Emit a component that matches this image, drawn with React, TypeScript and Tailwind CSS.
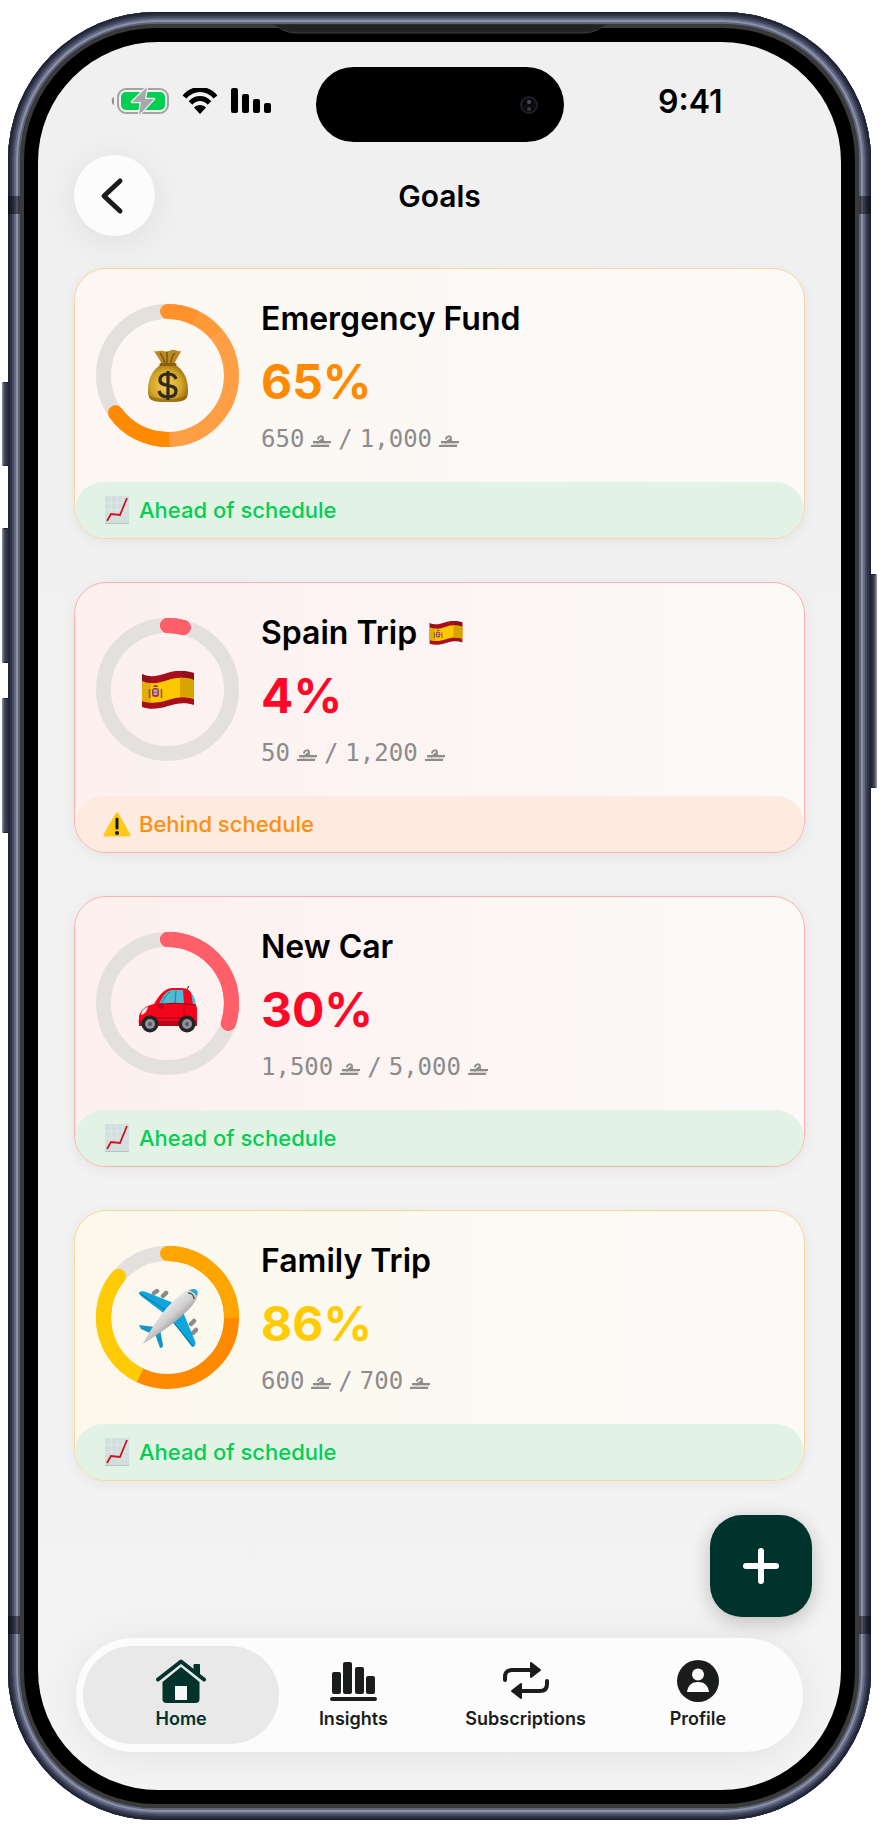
import React from 'react'

type Segment = { from: number; to: number; color: string }

type Goal = {
    name: string
    flag?: boolean
    percent: number
    saved: string
    target: string
    ahead: boolean
    icon: React.ReactNode
    segments: Segment[]
    cardStyle: string
    percentStyle: string
}

function SpainFlag({ className }: { className: string }) {
    return (
        <svg viewBox="0 0 54 38" className={className} role="img" aria-label="Flag of Spain">
            <path d="M1 3C9 7 17 5 26 2S43-1 53 2V34C45 31 36 32 27 35S9 39 1 36Z" fill="#a80f1c" />
            <path d="M1 10C10 14 18 12 27 9S44 6 53 9V28C44 25 36 26 27 29S9 33 1 30Z" fill="#fdc800" />
            <path d="M39 7C44 6 49 7 53 9V28C48 26 43 26 39 26Z" fill="#d9a300" />
            <path d="M1 10C4 11.500 7 12 10 12V31C7 31 4 31 1 30Z" fill="#e3ac08" />
            <path d="M1 3C3 4 6 5 9 5V12C6 12 3 11 1 10ZM41 0C45 0 49 1 53 2V9C49 7 45 7 41 7Z" fill="#7d0d18" opacity=".45" />
            <rect x="11" y="17" width="7" height="9" rx="3" fill="#a8323a" />
            <path d="M12.500 18.500h4v3h-4zM12.500 22h4v2h-4z" fill="#a9a6c8" />
            <path d="M12 16c1-3 4-3 5 0z" fill="#8b4a1c" />
            <path d="M8.500 18v9M20.500 18v9" stroke="#7a5a2e" strokeWidth="1.500" />
        </svg>
    )
}

function MoneyBag() {
    return (
        <svg viewBox="0 0 42 54" className="w-[42px] h-[54px]" role="img" aria-label="Money bag">
            <defs>
                <radialGradient id="bag" cx=".45" cy=".55" r=".6">
                    <stop offset="0" stopColor="#f4d25a" />
                    <stop offset=".65" stopColor="#d3a428" />
                    <stop offset="1" stopColor="#96690f" />
                </radialGradient>
            </defs>
            <path d="M7 2c4 1 6-1 9 0s6 0 9-1 6 2 9 1c-1 4-5 8-7 14H15C13 10 9 6 7 2Z" fill="#b98a22" />
            <path d="M13 4c3 3 4 7 5 11M20 3v12M28 4c-3 3-4 7-4 11" stroke="#7a540f" strokeWidth="1.500" fill="none" />
            <path d="M15 15h12c9 5 14 14 14 26 0 10-2 12-20 12S1 51 1 41C1 29 6 20 15 15Z" fill="url(#bag)" />
            <path d="M2 46c4 5 34 5 38 0-1 6-5 7-19 7S3 52 2 46Z" fill="#8f620e" opacity=".6" />
            <path d="M14 15.500h14" stroke="#8a5f12" strokeWidth="3" strokeLinecap="round" />
            <path d="M29 30c-1-4-4-5-8-5-5 0-8 2-8 6 0 8 16 3 16 11 0 4-3 6-8 6s-8-2-9-6M21 22v29" fill="none" stroke="#33291c" strokeWidth="3.200" />
        </svg>
    )
}

function Car() {
    return (
        <svg viewBox="0 0 60 47" className="w-[60px] h-[47px] mt-3" role="img" aria-label="Car">
            <path d="M48 5l3-5" stroke="#444" strokeWidth="1.200" />
            <path d="M1 30c2-7 7-10 15-12C22 8 27 2 35 2h8c7 0 10 3 12 9l4 11v15c0 3-2 3-5 3H5c-4 0-5-3-4-7Z" fill="#f3061d" />
            <path d="M21 18C25 9 29 4 35 4h10l1 14Z" fill="#4fbbd2" />
            <path d="M24 17c2-5 4-8 8-11M38 5l-1 12" stroke="#1d7f98" strokeWidth="1" fill="none" />
            <path d="M53 7c3 2 4 6 5 12l-3-1Z" fill="#4fbbd2" />
            <path d="M19 19c10-2 25-2 39 0" stroke="#a80012" strokeWidth="1.200" fill="none" />
            <path d="M12 32h34" stroke="#b1001a" strokeWidth="1.500" />
            <path d="M46 20v10" stroke="#c3001a" strokeWidth="1" />
            <path d="M3 29c0-4 3-7 7-8-1 4-3 7-7 8Z" fill="#ffe9dd" />
            <path d="M1 35h58v5H1z" fill="#b3091b" />
            <circle cx="23" cy="20" r="3" fill="#c8001a" />
            {[12, 49].map((cx) => (
                <g key={cx}>
                    <circle cx={cx} cy="38" r="8.500" fill="#222427" />
                    <circle cx={cx} cy="38" r="5" fill="#8f9296" />
                    <circle cx={cx} cy="38" r="2" fill="#55585c" />
                </g>
            ))}
        </svg>
    )
}

function Plane() {
    return (
        <svg viewBox="0 0 60 60" className="w-[60px] h-[60px]" role="img" aria-label="Airplane">
            <defs>
                <linearGradient id="hull" x1=".3" y1=".3" x2=".65" y2=".7">
                    <stop offset="0" stopColor="#f4f3f3" />
                    <stop offset=".55" stopColor="#cfcdcd" />
                    <stop offset="1" stopColor="#858384" />
                </linearGradient>
            </defs>
            <g stroke="#8b898a" strokeWidth="4.500" strokeLinecap="round">
                <path d="M16 5l3-2M25 8l3-3M53 36l3-3M55 45l3-3" />
            </g>
            <path d="M1 5C2 3 5 3 8 4L38 16 28 27 3 8Z" fill="#0fa5dc" />
            <path d="M45 24L35 34 54 59c3 0 4-3 3-6Z" fill="#0fa5dc" />
            <path d="M1 37l16 2-3 7L3 41ZM22 41l-5 5 5 14c2 0 3-1 3-3Z" fill="#1694c9" />
            <path d="M1 5l34 22M35 34l20 24" stroke="#0b6f9c" strokeWidth="1" />
            <path d="M5 56c4-8 10-19 22-34C37 10 47 1 55 1s6 9-3 19C40 33 22 45 5 56Z" fill="url(#hull)" />
            <path d="M55 1c5 0 5 3 4 7l-3-3c-2-1-3-2-5-3Z" fill="#2aa9d8" />
            <path d="M50 5c4 0 6 3 6 6" stroke="#555" strokeWidth="1.500" fill="none" />
        </svg>
    )
}

function ChartIcon() {
    return (
        <svg viewBox="0 0 24 28" className="w-6 h-7 shrink-0" aria-hidden="true">
            <rect width="24" height="28" fill="#d3dfdf" />
            <path d="M0 7h24M0 14h24M6 0v20M12 0v20M18 0v20" stroke="#dde8e8" strokeWidth="1" />
            <path d="M0 27.500h24" stroke="#bcc2c2" strokeWidth="1" />
            <path d="M2 25l4-7 9 1 7-17" fill="none" stroke="#cf1222" strokeWidth="1.800" />
        </svg>
    )
}

function WarningIcon() {
    return (
        <svg viewBox="0 0 28 25" className="w-7 h-[25px] -mx-0.5 shrink-0" aria-hidden="true">
            <path d="M14 2L26 23H2Z" fill="#ffc917" stroke="#ffc917" strokeWidth="3" strokeLinejoin="round" />
            <path d="M14 7v9" stroke="#171717" strokeWidth="3" strokeLinecap="round" />
            <circle cx="14" cy="21" r="2" fill="#171717" />
        </svg>
    )
}

function Currency() {
    return (
        <svg viewBox="0 0 20 12" className="w-5 h-3 mt-1" role="img" aria-label="rial" fill="none" stroke="#8c8c8c">
            <path d="M2 7h18M0 11h18" strokeWidth="2" />
            <path d="M2 9h17" strokeWidth="1.500" opacity=".4" />
            <path d="M7 4.500C7 .5 12.500.5 12 3.500c-1 2 0 3 3 4" strokeWidth="2" />
            <path d="M11.500 4C10 5 8 7 6 8" strokeWidth="2" />
        </svg>
    )
}

function ProgressRing({ segments, children }: { segments: Segment[]; children: React.ReactNode }) {
    const circumference = 2 * Math.PI * 64
    // Rounded first and last arcs go underneath, the flat ones above hide their inner caps
    const first = segments[0]
    const last = segments[segments.length - 1]
    return (
        <div className="grid place-items-center w-[143px] h-[143px] shrink-0">
            <svg viewBox="0 0 143 143" className="col-start-1 row-start-1 w-full -rotate-90" aria-hidden="true">
                <circle cx="71.500" cy="71.500" r="64" fill="none" stroke="#e4e0de" strokeWidth="15" />
                {[first, last].map((s, i) => (
                    <circle
                        key={i}
                        cx="71.500"
                        cy="71.500"
                        r="64"
                        fill="none"
                        stroke={s.color}
                        strokeWidth="15"
                        strokeLinecap="round"
                        strokeDasharray={`${(s.to - s.from) * circumference} ${circumference}`}
                        strokeDashoffset={-s.from * circumference}
                    />
                ))}
                {segments.length > 1 &&
                    segments.map((s, i) => (
                        <circle
                            key={i}
                            cx="71.500"
                            cy="71.500"
                            r="64"
                            fill="none"
                            stroke={s.color}
                            strokeWidth="15"
                            strokeDasharray={`${(s.to - s.from) * circumference} ${circumference}`}
                            strokeDashoffset={-s.from * circumference}
                        />
                    ))}
            </svg>
            <div className="col-start-1 row-start-1">{children}</div>
        </div>
    )
}

const goals: Goal[] = [
    {
        name: 'Emergency Fund',
        percent: 65,
        saved: '650',
        target: '1,000',
        ahead: true,
        icon: <MoneyBag />,
        segments: [
            { from: 0, to: 0.07, color: '#ff922b' },
            { from: 0.07, to: 0.14, color: '#ff9837' },
            { from: 0.14, to: 0.495, color: '#ff9f45' },
            { from: 0.495, to: 0.65, color: '#ff8a00' },
        ],
        cardStyle: 'from-[#fcf7f2] to-[#fbfaf8] border-[#fad3a6]',
        percentStyle: 'text-[#ff8a00]',
    },
    {
        name: 'Spain Trip',
        flag: true,
        percent: 4,
        saved: '50',
        target: '1,200',
        ahead: false,
        icon: <SpainFlag className="w-[54px] h-[38px]" />,
        segments: [{ from: 0, to: 0.04, color: '#ff5f69' }],
        cardStyle: 'from-[#fdf0ef] to-[#fbfaf8] border-[#ffb0ab]',
        percentStyle: 'text-[#ff0728]',
    },
    {
        name: 'New Car',
        percent: 30,
        saved: '1,500',
        target: '5,000',
        ahead: true,
        icon: <Car />,
        segments: [{ from: 0, to: 0.3, color: '#ff5f69' }],
        cardStyle: 'from-[#fdf0ef] to-[#fbfaf8] border-[#ffb0ab]',
        percentStyle: 'text-[#ff0728]',
    },
    {
        name: 'Family Trip',
        percent: 86,
        saved: '600',
        target: '700',
        ahead: true,
        icon: <Plane />,
        segments: [
            { from: 0, to: 0.25, color: '#ffa500' },
            { from: 0.25, to: 0.57, color: '#ff8a00' },
            { from: 0.57, to: 0.86, color: '#ffcb05' },
        ],
        cardStyle: 'from-[#fcf8ec] to-[#fbfaf8] border-[#f8d998]',
        percentStyle: 'text-[#ffcb05]',
    },
]

function GoalCard({ goal }: { goal: Goal }) {
    return (
        <article className={`rounded-[32px] border bg-linear-to-r ${goal.cardStyle} shadow-[0_3px_14px_rgba(0,0,0,0.06)] overflow-hidden`}>
            <div className="flex gap-[22px] pl-[21px] pt-[35px] pb-[29px]">
                <ProgressRing segments={goal.segments}>{goal.icon}</ProgressRing>
                <div className="flex flex-col">
                    <h2 className="flex items-center gap-3 text-[32px] leading-[30px] font-semibold text-black">
                        {goal.name}
                        {goal.flag && <SpainFlag className="w-[34px] h-6" />}
                    </h2>
                    <p className={`mt-[18px] text-5xl leading-[60px] font-bold ${goal.percentStyle}`}>{goal.percent}%</p>
                    <p className="mt-[13px] flex items-center gap-[7px] font-['DejaVu_Sans_Mono',monospace] text-2xl leading-7 text-[#8c8c8c]">
                        <span>{goal.saved}</span>
                        <Currency />
                        <span>/</span>
                        <span>{goal.target}</span>
                        <Currency />
                    </p>
                </div>
            </div>
            {goal.ahead ? (
                <p className="flex items-center gap-2.5 h-14 pl-[30px] rounded-[28px] bg-[#e2f3e5] text-[22px] font-medium text-[#00cf52]">
                    <ChartIcon />
                    Ahead of schedule
                </p>
            ) : (
                <p className="flex items-center gap-2.5 h-14 pl-[30px] rounded-[28px] bg-[#fdeae1] text-[22px] font-medium text-[#ff8f0e]">
                    <WarningIcon />
                    Behind schedule
                </p>
            )}
        </article>
    )
}

function StatusBar() {
    return (
        <div className="grid grid-cols-[1fr_248px_1fr] items-center pt-[25px]">
            <div className="flex items-center gap-[13px] pl-[73px] pb-2">
                <svg viewBox="0 0 58 28" className="w-[58px] h-7" role="img" aria-label="Battery charging">
                    <path d="M3 10v8C-0 17-0 11 3 10Z" fill="#8e8e8e" />
                    <rect x="7" y="2" width="50" height="24" rx="8" fill="none" stroke="#a3a3a3" strokeWidth="2" />
                    <rect x="10" y="5" width="44" height="18" rx="5" fill="#00cf52" />
                    <path d="M36 0L21 15H30L28 28 43 12H34Z" fill="#a8a8aa" stroke="#f1f1f1" strokeWidth="2.500" strokeLinejoin="round" paintOrder="stroke" />
                </svg>
                <svg viewBox="0 0 36 26" className="w-9 h-[26px]" role="img" aria-label="Wi-Fi">
                    <path d="M2.500 9C11-1 25-1 33.500 9M8.500 15C14 9 22 9 27.500 15" fill="none" stroke="#000" strokeWidth="5" />
                    <path d="M18 26l-6-6.500c3-3.500 9-3.500 12 0Z" fill="#000" />
                </svg>
                <svg viewBox="0 0 41 26" className="w-[41px] h-[26px]" role="img" aria-label="Signal">
                    <rect x="0" y="0" width="7" height="25" rx="2" />
                    <rect x="11" y="6" width="7" height="19" rx="2" />
                    <rect x="22" y="11" width="7" height="14" rx="2" />
                    <rect x="33" y="15" width="7" height="10" rx="2" />
                </svg>
            </div>
            <div className="flex items-center justify-end h-[75px] pr-[26px] rounded-full bg-black">
                <svg viewBox="0 0 18 18" className="w-[18px] h-[18px]" aria-hidden="true">
                    <circle cx="9" cy="9" r="8" fill="#0b0b0d" stroke="#1d1e28" strokeWidth="2" />
                    <circle cx="9" cy="6" r="2" fill="#4b4b4f" />
                    <circle cx="9" cy="13" r="2" fill="#38383b" />
                </svg>
            </div>
            <p className="pr-6 pb-1.5 text-center text-[32px] leading-9 font-semibold text-black">9:41</p>
        </div>
    )
}

function HomeIcon() {
    return (
        <svg viewBox="0 0 50 44" className="w-[50px] h-11" fill="currentColor" aria-hidden="true">
            <path d="M38 5.500h5.500v11L38 12Z" stroke="currentColor" strokeLinejoin="round" />
            <path d="M2 20.500L25 2.500 48 20.500" fill="none" stroke="currentColor" strokeWidth="4" strokeLinecap="round" strokeLinejoin="round" />
            <path fillRule="evenodd" d="M25 8L43.500 23V40a4 4 0 0 1-4 4h-29a4 4 0 0 1-4-4V23ZM19 27v14h12V27Z" />
            <path d="M19 27h12v14H19z" fill="#f7f7f7" />
        </svg>
    )
}

function InsightsIcon() {
    return (
        <svg viewBox="0 0 47 44" className="w-[47px] h-11" fill="currentColor" aria-hidden="true">
            <rect x="2" y="13" width="9" height="22" rx="2" />
            <rect x="13" y="3" width="9" height="32" rx="2" />
            <rect x="25" y="8" width="9" height="27" rx="2" />
            <rect x="36" y="17" width="9" height="18" rx="2" />
            <rect x="0" y="38" width="47" height="4" rx="2" />
        </svg>
    )
}

function SubscriptionsIcon() {
    return (
        <svg viewBox="0 0 46 44" className="w-[46px] h-11" fill="currentColor" stroke="currentColor" strokeLinejoin="round" aria-hidden="true">
            <path d="M2 21v-3c0-5 3-7 7-7h20" fill="none" strokeWidth="4" strokeLinecap="round" />
            <path d="M44 22v3c0 5-3 7-7 7H17" fill="none" strokeWidth="4" strokeLinecap="round" />
            <path d="M28 4L37 11 28 18ZM18 25L9 32 18 39Z" strokeWidth="2" />
        </svg>
    )
}

function ProfileIcon() {
    return (
        <svg viewBox="0 0 44 44" className="w-11 h-11" aria-hidden="true">
            <circle cx="22" cy="22" r="21" fill="currentColor" />
            <circle cx="22" cy="15.500" r="6" fill="#fcfcfc" />
            <path d="M11 33c1-7 5-10 11-10s10 3 11 10Z" fill="#fcfcfc" />
        </svg>
    )
}

function NavBar() {
    const items = [
        { label: 'Insights', icon: <InsightsIcon /> },
        { label: 'Subscriptions', icon: <SubscriptionsIcon /> },
        { label: 'Profile', icon: <ProfileIcon /> },
    ]
    return (
        <nav className="mx-[38px] mt-[21px] mb-[38px] grid grid-cols-4 h-[114px] px-[19px] py-2 rounded-full bg-[#fcfcfc] shadow-[0_4px_36px_rgba(0,0,0,0.07)] text-lg leading-6 font-semibold text-[#1a1d1c]">
            <a href="#home" aria-current="page" className="-mx-3 flex flex-col items-center justify-center gap-1 rounded-full bg-[#e9e9e9] text-[#00332b]">
                <HomeIcon />
                Home
            </a>
            {items.map((item) => (
                <a key={item.label} href={`#${item.label.toLowerCase()}`} className="flex flex-col items-center justify-center gap-1">
                    {item.icon}
                    {item.label}
                </a>
            ))}
        </nav>
    )
}

function SideKeys() {
    const key = 'absolute w-1.5 border-y border-[#202436] bg-linear-to-r'
    return (
        <>
            <span className={`${key} -left-1.5 top-[370px] h-[84px] rounded-l-xs from-[#8b91a8] via-[#3a3f52] to-[#2a2e40]`} />
            <span className={`${key} -left-1.5 top-[516px] h-[135px] rounded-l-xs from-[#8b91a8] via-[#3a3f52] to-[#2a2e40]`} />
            <span className={`${key} -left-1.5 top-[686px] h-[135px] rounded-l-xs from-[#8b91a8] via-[#3a3f52] to-[#2a2e40]`} />
            <span className={`${key} -right-1.5 top-[562px] h-[214px] rounded-r-xs from-[#1d2132] via-[#3a3f52] to-[#9ba0b4]`} />
            <span className="absolute left-0 top-[184px] w-3 h-[18px] bg-black/45" />
            <span className="absolute right-0 top-[184px] w-3 h-[18px] bg-black/45" />
            <span className="absolute left-0 bottom-[186px] w-3 h-[18px] bg-black/45" />
            <span className="absolute right-0 bottom-[186px] w-3 h-[18px] bg-black/45" />
            <svg viewBox="0 0 348 10" className="absolute left-1/2 top-3 w-[348px] h-2.5 -translate-x-1/2" aria-hidden="true">
                <path d="M0 0c12 0 16 9 30 9h288c14 0 18-9 30-9Z" fill="#222" stroke="#3c3c3c" strokeWidth="1" />
            </svg>
        </>
    )
}

export default function App() {
    return (
        <div className="bg-white px-2 py-3 font-[Inter,sans-serif]">
            <div className="relative rounded-[148px] p-3 bg-[#3a3a3a] shadow-[inset_0_0_0_2px_#202436,inset_0_0_0_4px_#2f3447,inset_0_0_0_6px_#43495e,inset_0_0_0_8px_#636981,inset_0_0_0_10px_#8b91aa,inset_0_0_0_12px_#5d6379]">
                <div className="rounded-[136px] bg-[#3a3a3a] p-1">
                    <div className="rounded-[132px] bg-black p-3.5">
                        <main className="flex flex-col rounded-[120px] overflow-hidden bg-linear-to-b from-[#f0f0f0] to-[#f3f3f3]">
                            <StatusBar />
                            <header className="grid grid-cols-[81px_1fr_81px] items-center px-9 mt-[13px]">
                                <button type="button" aria-label="Back" className="grid place-items-center h-[81px] rounded-full bg-[#fcfcfc] shadow-[0_6px_36px_rgba(0,0,0,0.08)]">
                                    <svg viewBox="0 0 24 38" className="w-6 h-[38px] -ml-1.5" fill="none" stroke="#1c1c1c" strokeWidth="5" strokeLinecap="round" strokeLinejoin="round">
                                        <path d="M20 4L4 19 20 34" />
                                    </svg>
                                </button>
                                <h1 className="text-center text-[30px] leading-9 font-semibold text-black">Goals</h1>
                            </header>
                            <section className="flex flex-col gap-[43px] px-9 mt-8">
                                {goals.map((goal) => (
                                    <GoalCard key={goal.name} goal={goal} />
                                ))}
                            </section>
                            <button type="button" aria-label="Add goal" className="self-end mt-[34px] mr-[29px] grid place-items-center w-[102px] h-[102px] rounded-[32px] bg-[#00332b] shadow-[0_5px_20px_rgba(0,0,0,0.22)]">
                                <svg viewBox="0 0 38 38" className="w-[38px] h-[38px]" stroke="#fff" strokeWidth="6" strokeLinecap="round">
                                    <path d="M19 4v30M4 19h30" />
                                </svg>
                            </button>
                            <NavBar />
                        </main>
                    </div>
                </div>
                <SideKeys />
            </div>
        </div>
    )
}
